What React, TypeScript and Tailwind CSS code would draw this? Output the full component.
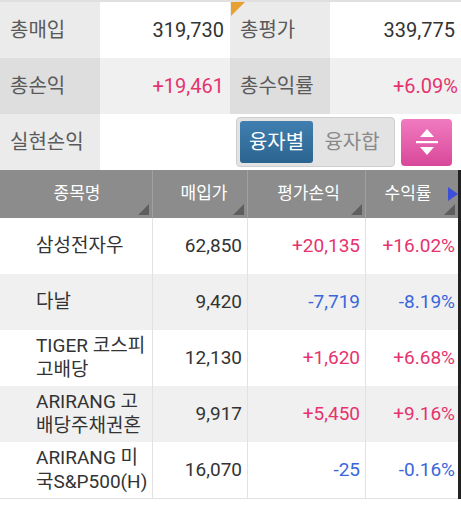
import React from 'react';

const font = { fontFamily: "Roboto, 'Noto Sans CJK KR', sans-serif" };

type Stock = { name: string; price: string; pl: string; rate: string; up: boolean };

const stocks: Stock[] = [
  { name: '삼성전자우', price: '62,850', pl: '+20,135', rate: '+16.02%', up: true },
  { name: '다날', price: '9,420', pl: '-7,719', rate: '-8.19%', up: false },
  { name: 'TIGER 코스피 고배당', price: '12,130', pl: '+1,620', rate: '+6.68%', up: true },
  { name: 'ARIRANG 고배당주채권혼', price: '9,917', pl: '+5,450', rate: '+9.16%', up: true },
  { name: 'ARIRANG 미국S&P500(H)', price: '16,070', pl: '-25', rate: '-0.16%', up: false },
];

// little dark corner mark in header cells
const Corner = () => (
  <svg className="absolute right-[3px] bottom-[3px]" width="11" height="11" viewBox="0 0 11 11">
    <polygon points="11,0 11,11 0,11" fill="#5e5e5e" />
  </svg>
);

const App: React.FC = () => {
  return (
    <div className="w-[461px] h-[506px] bg-white overflow-hidden" style={font}>
      <div className="h-[2px] bg-[#e0e0e0]" />

      {/* summary */}
      <div className="grid grid-cols-[100px_130px_100px_131px]">
        <div className="h-[56px] bg-[#ebebeb] flex items-center pl-[10px] text-[20px] text-[#5a5a5a]">총매입</div>
        <div className="h-[56px] bg-white flex items-center justify-end pr-[6px] text-[20px] text-[#333]">319,730</div>
        <div className="relative h-[56px] bg-[#ebebeb] flex items-center pl-[10px] text-[20px] text-[#5a5a5a]">
          <svg className="absolute left-[1px] top-0" width="14" height="14" viewBox="0 0 14 14">
            <polygon points="0,0 14,0 0,14" fill="#e8a032" />
          </svg>
          총평가
        </div>
        <div className="h-[56px] bg-white flex items-center justify-end pr-[6px] text-[20px] text-[#333]">339,775</div>

        <div className="h-[56px] bg-[#dedede] flex items-center pl-[10px] text-[20px] text-[#5a5a5a]">총손익</div>
        <div className="h-[56px] bg-[#f0f0f0] flex items-center justify-end pr-[6px] text-[20px] text-[#e6336e]">+19,461</div>
        <div className="h-[56px] bg-[#dedede] flex items-center pl-[10px] text-[20px] text-[#5a5a5a]">총수익률</div>
        <div className="h-[56px] bg-[#f0f0f0] flex items-center justify-end pr-[3px] text-[20px] text-[#e6336e]">+6.09%</div>

        <div className="h-[56px] bg-[#ebebeb] flex items-center pl-[10px] text-[20px] text-[#5a5a5a]">실현손익</div>
        <div className="h-[56px] bg-white" />
        <div className="col-span-2 h-[56px] bg-white flex items-center pl-[6px] gap-[6px]">
          <div className="w-[159px] h-[50px] rounded-[4px] border border-[#cfcfcf] bg-[#e3e3e3] flex items-center p-[3px]">
            <div className="w-[73px] h-full rounded-[3px] bg-gradient-to-b from-[#3f7fb0] to-[#2c6490] flex items-center justify-center text-white text-[20px]">
              융자별
            </div>
            <div className="flex-1 flex items-center justify-center text-[#8a8a8a] text-[20px]">융자합</div>
          </div>
          <div className="w-[51px] h-[47px] rounded-[4px] bg-gradient-to-b from-[#f07ac0] to-[#d8479a] flex items-center justify-center">
            <svg width="24" height="30" viewBox="0 0 24 30">
              <polygon points="12,2 19,10 5,10" fill="white" />
              <rect x="1" y="14" width="22" height="2.2" fill="white" />
              <polygon points="5,20 19,20 12,28" fill="white" />
            </svg>
          </div>
        </div>
      </div>

      {/* table */}
      <div className="flex">
        <div className="w-[458px]">
          <div className="grid grid-cols-[153px_95px_118px_92px] h-[48px] bg-[#8c8c8c] text-white text-[17px]">
            <div className="relative flex items-center justify-center border-r border-[#a0a0a0]">
              <span className="pl-[2px]">종목명</span>
              <Corner />
            </div>
            <div className="relative flex items-center justify-center border-r border-[#a0a0a0]">
              <span className="pl-[8px]">매입가</span>
              <Corner />
            </div>
            <div className="relative flex items-center justify-center border-r border-[#a0a0a0]">
              <span className="pl-[4px]">평가손익</span>
              <Corner />
            </div>
            <div className="relative flex items-center justify-center">
              <span className="pr-[8px]">수익률</span>
              <svg className="absolute right-0 top-[17px]" width="10" height="14" viewBox="0 0 10 14">
                <polygon points="0,0 10,7 0,14" fill="#3b4fd8" />
              </svg>
              <Corner />
            </div>
          </div>

          {stocks.map((s, i) => {
            const color = s.up ? 'text-[#e6336e]' : 'text-[#3a66dc]';
            return (
              <div
                key={s.name}
                className={`grid grid-cols-[153px_95px_118px_92px] h-[56px] text-[19px] ${i % 2 === 1 ? 'bg-[#f0f0f0]' : 'bg-white'}`}
              >
                <div className="flex items-center pl-[36px] pr-[2px] border-r border-[#e2e2e2] text-[#333] text-[19px] leading-[24px]">
                  <span>{s.name}</span>
                </div>
                <div className="flex items-center justify-end pr-[5px] border-r border-[#e2e2e2] text-[#333]">{s.price}</div>
                <div className={`flex items-center justify-end pr-[5px] border-r border-[#e2e2e2] ${color}`}>{s.pl}</div>
                <div className={`flex items-center justify-end pr-[3px] ${color}`}>{s.rate}</div>
              </div>
            );
          })}
          <div className="h-px bg-[#e2e2e2]" />
        </div>
        <div className="w-[3px] bg-[#222]" />
      </div>
    </div>
  );
};

export default App;
